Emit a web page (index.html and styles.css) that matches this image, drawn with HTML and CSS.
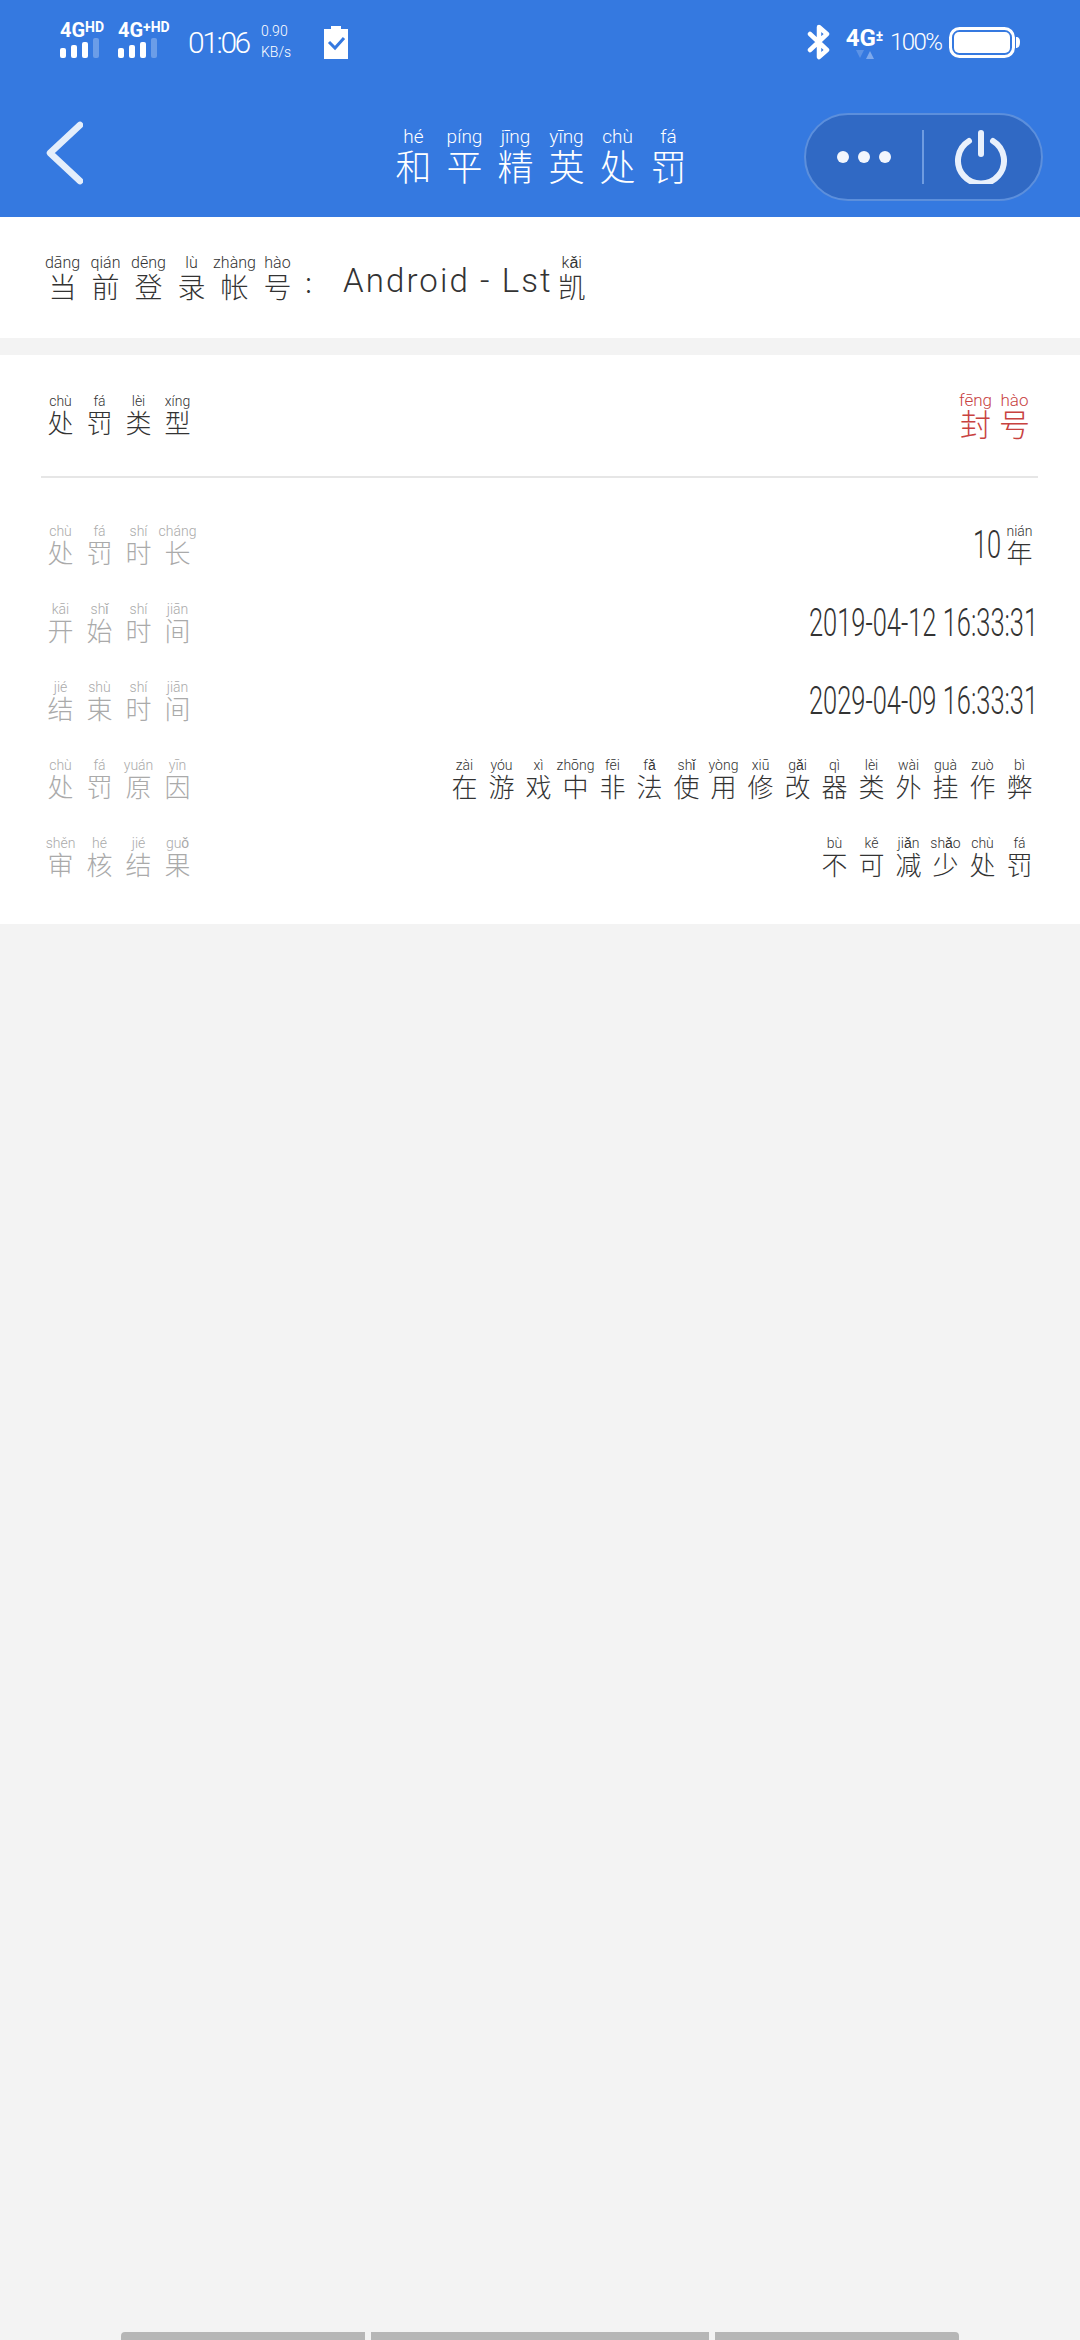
FILE: index.html
```html
<!DOCTYPE html>
<html lang="zh-CN">
<head>
  <meta charset="UTF-8" />
  <meta name="viewport" content="width=device-width, initial-scale=1.0"/>
  <title>和平精英处罚</title>
  <link rel="stylesheet" href="styles.css">
</head>
<body>
  <div class="page">
    <header class="top">
      <div class="status">
        <div class="status-group">
          <div class="signal">
            <p class="net">4G<sup>HD</sup></p>
            <div class="bars"><i class="b1"></i><i class="b2"></i><i class="b3"></i><i class="b4"></i></div>
          </div>
          <div class="signal signal--plus">
            <p class="net">4G<sup>+HD</sup></p>
            <div class="bars"><i class="b1"></i><i class="b2"></i><i class="b3"></i><i class="b4"></i></div>
          </div>
          <p class="clock">01:06</p>
          <p class="speed">0.90<br>KB/s</p>
          <svg class="clip-icon" viewBox="0 0 24 33" width="24" height="33">
            <path d="M0 3h7V0h10v3h7v30H0z" fill="#fff"/>
            <path d="M5 16l6 6 9-10" fill="none" stroke="#3579e0" stroke-width="3"/>
          </svg>
        </div>
        <div class="status-group status-group--right">
          <svg class="bt-icon" viewBox="0 0 24 36" width="24" height="36">
            <path d="M3 10l17 16-8 7V3l8 7L3 26" fill="none" stroke="#fff" stroke-width="4.5" stroke-linejoin="round" stroke-linecap="round"/>
          </svg>
          <div class="net-right">
            <p class="net">4G<sup class="half">±</sup></p>
            <svg class="arrows" viewBox="0 0 20 9" width="20" height="9">
              <path d="M1 0h8L5 8z" fill="#5c93e6"/>
              <path d="M11 9l4-8 4 8z" fill="#7ea9ec"/>
            </svg>
          </div>
          <p class="percent">100%</p>
          <svg class="battery" viewBox="0 0 71 31" width="71" height="31">
            <rect x="1.5" y="1.5" width="63" height="28" rx="9" fill="none" stroke="#fff" stroke-width="3"/>
            <rect x="5" y="5" width="56" height="21" rx="5" fill="#fff"/>
            <path d="M67 10c3 0 4 2 4 5s-1 6-4 6z" fill="#fff"/>
          </svg>
        </div>
      </div>

      <nav class="nav">
        <svg class="back" viewBox="0 0 38 64" width="38" height="64">
          <path d="M35 4L5 32l30 28" fill="none" stroke="#e4eefb" stroke-width="6.5" stroke-linecap="round" stroke-linejoin="round"/>
        </svg>
        <h1 class="title">
          <ruby>和<rt>hé</rt></ruby><ruby>平<rt>píng</rt></ruby><ruby>精<rt>jīng</rt></ruby><ruby>英<rt>yīng</rt></ruby><ruby>处<rt>chù</rt></ruby><ruby>罚<rt>fá</rt></ruby>
        </h1>
        <div class="pill">
          <div class="dots"><i></i><i></i><i></i></div>
          <span class="pill-line"></span>
          <svg class="power" viewBox="0 0 54 54" width="54" height="54">
            <path d="M15 11a23 23 0 1 0 24 0" fill="none" stroke="#e8f0fc" stroke-width="6" stroke-linecap="round"/>
            <path d="M27 3v21" fill="none" stroke="#e8f0fc" stroke-width="6" stroke-linecap="round"/>
          </svg>
        </div>
      </nav>
    </header>

    <section class="account">
      <span class="zh"><ruby>当<rt>dāng</rt></ruby><ruby>前<rt>qián</rt></ruby><ruby>登<rt>dēng</rt></ruby><ruby>录<rt>lù</rt></ruby><ruby>帐<rt>zhàng</rt></ruby><ruby>号<rt>hào</rt></ruby></span>
      <span class="colon">:</span>
      <span class="latin">Android - Lst</span>
      <ruby>凯<rt>kǎi</rt></ruby>
    </section>

    <section class="card">
      <div class="row row--type">
        <span class="label label--dark"><ruby>处<rt>chù</rt></ruby><ruby>罚<rt>fá</rt></ruby><ruby>类<rt>lèi</rt></ruby><ruby>型<rt>xíng</rt></ruby></span>
        <span class="banned"><ruby>封<rt>fēng</rt></ruby><ruby>号<rt>hào</rt></ruby></span>
      </div>
      <div class="rows">
        <div class="row">
          <span class="label"><ruby>处<rt>chù</rt></ruby><ruby>罚<rt>fá</rt></ruby><ruby>时<rt>shí</rt></ruby><ruby>长<rt>cháng</rt></ruby></span>
          <span class="value"><span class="num">10</span><ruby>年<rt>nián</rt></ruby></span>
        </div>
        <div class="row">
          <span class="label"><ruby>开<rt>kāi</rt></ruby><ruby>始<rt>shǐ</rt></ruby><ruby>时<rt>shí</rt></ruby><ruby>间<rt>jiān</rt></ruby></span>
          <span class="value"><span class="num">2019-04-12 16:33:31</span></span>
        </div>
        <div class="row">
          <span class="label"><ruby>结<rt>jié</rt></ruby><ruby>束<rt>shù</rt></ruby><ruby>时<rt>shí</rt></ruby><ruby>间<rt>jiān</rt></ruby></span>
          <span class="value"><span class="num">2029-04-09 16:33:31</span></span>
        </div>
        <div class="row">
          <span class="label"><ruby>处<rt>chù</rt></ruby><ruby>罚<rt>fá</rt></ruby><ruby>原<rt>yuán</rt></ruby><ruby>因<rt>yīn</rt></ruby></span>
          <span class="value"><ruby>在<rt>zài</rt></ruby><ruby>游<rt>yóu</rt></ruby><ruby>戏<rt>xì</rt></ruby><ruby>中<rt>zhōng</rt></ruby><ruby>非<rt>fēi</rt></ruby><ruby>法<rt>fǎ</rt></ruby><ruby>使<rt>shǐ</rt></ruby><ruby>用<rt>yòng</rt></ruby><ruby>修<rt>xiū</rt></ruby><ruby>改<rt>gǎi</rt></ruby><ruby>器<rt>qì</rt></ruby><ruby>类<rt>lèi</rt></ruby><ruby>外<rt>wài</rt></ruby><ruby>挂<rt>guà</rt></ruby><ruby>作<rt>zuò</rt></ruby><ruby>弊<rt>bì</rt></ruby></span>
        </div>
        <div class="row">
          <span class="label"><ruby>审<rt>shěn</rt></ruby><ruby>核<rt>hé</rt></ruby><ruby>结<rt>jié</rt></ruby><ruby>果<rt>guǒ</rt></ruby></span>
          <span class="value"><ruby>不<rt>bù</rt></ruby><ruby>可<rt>kě</rt></ruby><ruby>减<rt>jiǎn</rt></ruby><ruby>少<rt>shǎo</rt></ruby><ruby>处<rt>chù</rt></ruby><ruby>罚<rt>fá</rt></ruby></span>
        </div>
      </div>
    </section>

    <div class="rest">
      <span class="nav-bar nav-bar--left"></span>
      <span class="nav-bar nav-bar--mid"></span>
      <span class="nav-bar nav-bar--right"></span>
    </div>
  </div>
</body>
</html>
```

FILE: styles.css
```css
body {
  margin: 0;
  font-family: "Noto Sans CJK SC", "Noto Sans", sans-serif;
  font-weight: 300;
  color: #333;
  background: #f3f3f3;
}

p, h1 {
  margin: 0;
}

.page {
  display: flex;
  flex-direction: column;
  height: 2340px;
}

/* pinyin sits over each character, every character has a fixed cell */
ruby {
  display: inline-flex;
  flex-direction: column-reverse;
  align-items: center;
  width: 37px;
  font-size: 26px;
  line-height: 26px;
}

rt {
  display: block;
  font-family: "Roboto", sans-serif;
  font-weight: 300;
  font-size: 14px;
  line-height: 16px;
  white-space: nowrap;
}

.top {
  background: #3579e0;
  color: #fff;
  height: 217px;
}

.status {
  display: flex;
  justify-content: space-between;
  align-items: center;
  height: 84px;
  padding: 0 60px;
}

.status-group {
  display: flex;
  align-items: center;
}

.signal {
  width: 58px;
  margin-bottom: 6px;
}

.net {
  font-family: "Roboto", sans-serif;
  font-weight: 700;
  font-size: 20px;
  line-height: 16px;
  white-space: nowrap;
}

.net sup {
  font-size: 14px;
  line-height: 12px;
  vertical-align: 5px;
}

.bars {
  display: flex;
  align-items: flex-end;
  gap: 5px;
  height: 20px;
}

.bars i {
  width: 6px;
  border-radius: 2px;
  background: #fff;
}

.bars .b1 { height: 10px; }
.bars .b2 { height: 13px; }
.bars .b3 { height: 16px; }
.bars .b4 { height: 20px; background: #6b9de8; }

.clock {
  font-family: "Roboto", sans-serif;
  font-weight: 300;
  font-size: 30px;
  letter-spacing: -2.4px;
  margin-left: 12px;
  width: 73px;
}

.speed {
  font-family: "Roboto", sans-serif;
  font-weight: 300;
  font-size: 14px;
  line-height: 21px;
  width: 63px;
}

.net-right {
  margin-left: 8px;
  width: 51px;
  display: flex;
  flex-direction: column;
  align-items: center;
}

.net-right .net {
  font-size: 24px;
  line-height: 24px;
}

.percent {
  font-family: "Roboto", sans-serif;
  font-weight: 300;
  font-size: 24px;
  letter-spacing: -1.6px;
  width: 59px;
}

.arrows {
  display: block;
}

.nav {
  display: grid;
  grid-template-columns: 1fr auto 1fr;
  align-items: center;
  height: 133px;
  box-sizing: border-box;
  padding: 5px 37px 0 45px;
}

.back {
  display: block;
}

.title {
  font-size: inherit;
  font-weight: 300;
  margin-left: -6px;
}

.title ruby {
  width: 51px;
  font-size: 36px;
  line-height: 36px;
}

.title rt {
  font-size: 19px;
  line-height: 20px;
}

.pill {
  justify-self: end;
  display: flex;
  align-items: center;
  width: 239px;
  height: 88px;
  margin-top: 8px;
  box-sizing: border-box;
  border: 2px solid #5c8fdc;
  border-radius: 44px;
  background: #3069c4;
}

.dots {
  display: flex;
  gap: 9px;
  margin-left: 31px;
}

.dots i {
  width: 12px;
  height: 12px;
  border-radius: 50%;
  background: #f2f6fd;
}

.pill-line {
  width: 2px;
  height: 54px;
  margin-left: 31px;
  background: #6f9ce0;
}

.power {
  margin-left: 30px;
}

.account {
  display: flex;
  align-items: flex-end;
  height: 121px;
  box-sizing: border-box;
  padding: 0 0 37px 41px;
  background: #fff;
}

.account ruby {
  width: 43px;
  font-size: 28px;
  line-height: 29px;
}

.account rt {
  font-size: 16px;
  line-height: 18px;
}

.account .zh {
  display: flex;
}

.colon {
  font-size: 28px;
  line-height: 40px;
  margin-left: 6px;
  width: 38px;
}

.latin {
  font-family: "Roboto", sans-serif;
  font-weight: 300;
  font-size: 33px;
  line-height: 40px;
  letter-spacing: 2.1px;
}

.account > ruby {
  width: 38px;
}

.card {
  margin-top: 17px;
  background: #fff;
  padding: 37px 42px 47px 41px;
}

.row {
  display: flex;
  justify-content: space-between;
  align-items: flex-end;
}

.row--type {
  padding-bottom: 41px;
  border-bottom: 2px solid #e6e6e6;
}

.rows {
  display: flex;
  flex-direction: column;
  gap: 36px;
  margin-top: 45px;
}

.label {
  display: flex;
  color: #aaa;
}

.label ruby {
  width: 39px;
}

.label--dark {
  color: #333;
}

.banned {
  display: flex;
  color: #c8423f;
  margin-right: 4px;
  margin-bottom: -3px;
}

.banned ruby {
  width: 39px;
  font-size: 31px;
  line-height: 30px;
}

.banned rt {
  font-size: 17px;
  line-height: 16px;
}

.value {
  display: flex;
  align-items: flex-end;
}

/* the digits in the screenshot are tall and narrow */
.num {
  font-family: "Roboto", sans-serif;
  font-weight: 300;
  font-size: 38px;
  line-height: 36px;
  margin-bottom: 2px;
  transform: scaleX(0.67);
  transform-origin: right center;
}

.rest {
  flex: 1;
  display: flex;
  justify-content: center;
  align-items: flex-end;
  gap: 6px;
}

.nav-bar {
  height: 8px;
  background: #b6b6b6;
}

.nav-bar--left {
  width: 244px;
  border-radius: 4px 0 0 0;
}

.nav-bar--mid {
  width: 338px;
}

.nav-bar--right {
  width: 244px;
  border-radius: 0 4px 0 0;
}
```
